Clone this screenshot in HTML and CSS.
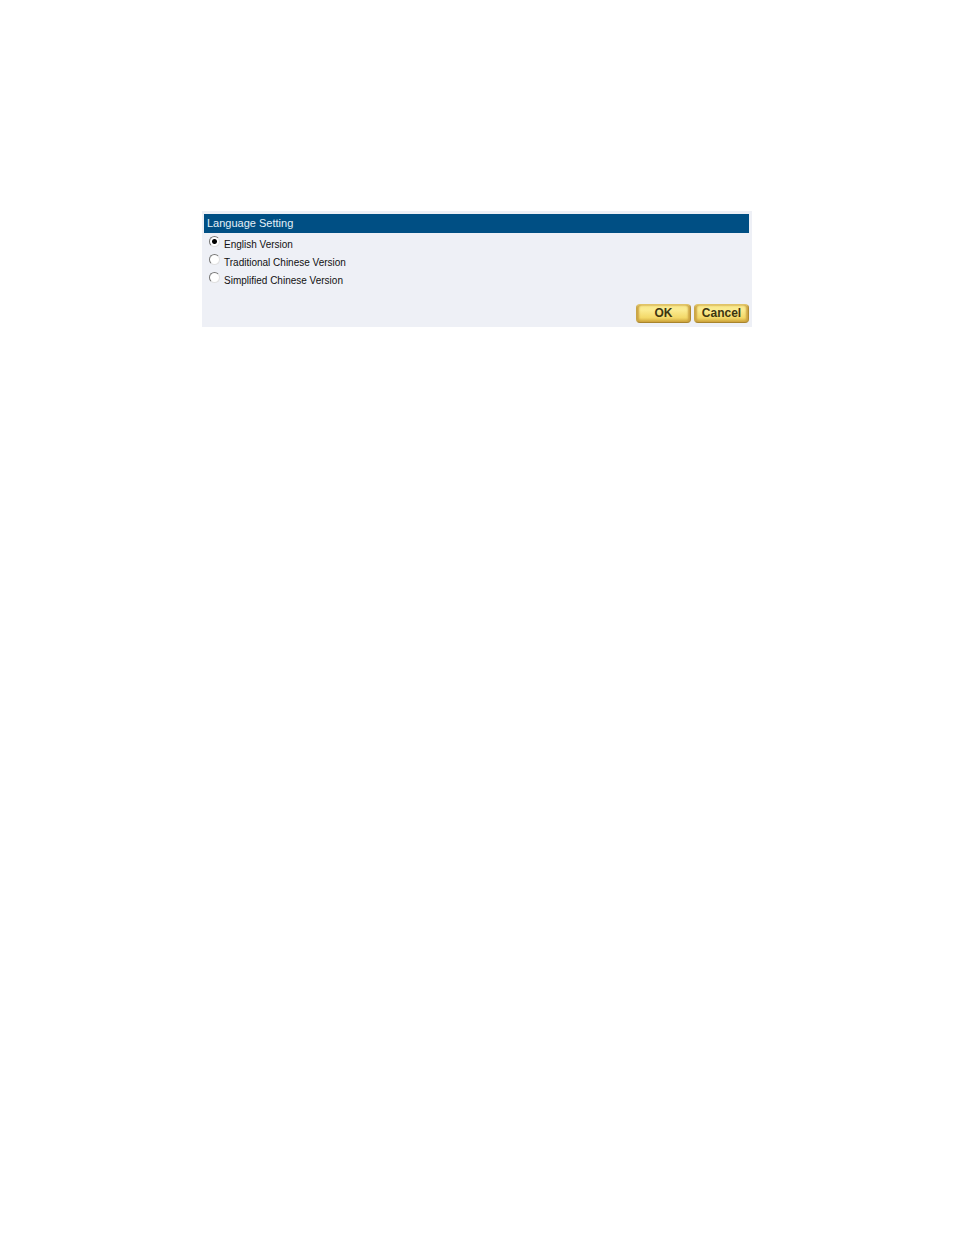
FILE: index.html
```html
<!DOCTYPE html>
<html lang="en">
<head>
    <meta charset="UTF-8">
    <meta name="viewport" content="width=device-width, initial-scale=1.0">
    <title>Language Setting</title>
    <link rel="stylesheet" href="styles.css">
</head>
<body>
    <form class="panel">
        <h1 class="panel-title" id="language-title">Language Setting</h1>
        <div class="options" role="radiogroup" aria-labelledby="language-title">
            <div class="option">
                <input type="radio" id="lang-en" name="language" value="en" checked>
                <label for="lang-en">English Version</label>
            </div>
            <div class="option">
                <input type="radio" id="lang-tc" name="language" value="tc">
                <label for="lang-tc">Traditional Chinese Version</label>
            </div>
            <div class="option">
                <input type="radio" id="lang-sc" name="language" value="sc">
                <label for="lang-sc">Simplified Chinese Version</label>
            </div>
        </div>
        <div class="actions">
            <button type="submit">OK</button>
            <button type="reset">Cancel</button>
        </div>
    </form>
</body>
</html>
```
FILE: styles.css
```css
body {
    font-family: Arial, "Liberation Sans", sans-serif;
    background-color: #fff;
    color: #111;
    margin: 0;
    padding: 211px 16px 16px;
}
.panel {
    box-sizing: border-box;
    max-width: 550px;
    margin: 0 auto;
    padding: 3px 3px 4px 2px;
    background-color: #eef0f6;
}
.panel-title {
    margin: 0;
    padding: 0 3px;
    background-color: #004f84;
    color: #e4f1f8;
    font-size: 11px;
    font-weight: normal;
    line-height: 19px;
}
.options {
    padding: 3px 5px 0;
}
.option {
    display: flex;
    align-items: flex-start;
    gap: 4px;
    height: 18px;
    font-size: 10px;
    line-height: 18px;
}
/* sunken round button with a light lower edge */
.option input {
    appearance: none;
    box-sizing: border-box;
    flex: none;
    width: 11px;
    height: 11px;
    margin: 0;
    border: 1px solid;
    border-color: #777 #e0e0e0 #e0e0e0 #777;
    border-radius: 50%;
    background-color: #fff;
}
.option input:checked {
    background-image: radial-gradient(circle, #000 2px, transparent 3px);
}
.actions {
    display: flex;
    justify-content: flex-end;
    gap: 3px;
    margin-top: 14px;
}
.actions button {
    width: 55px;
    height: 19px;
    padding: 0;
    border: 1px solid;
    border-color: #e0c468 #b08a30 #a8842c #c8a648;
    border-radius: 4px;
    background: linear-gradient(#f6e68c, #fbec92 30%, #f3d868 75%, #cfa63c);
    box-shadow: inset 2px 0 2px #cda544, inset -2px 0 2px #cda544;
    color: #3d3510;
    font-family: Impact, "Liberation Sans Narrow", "Liberation Sans", sans-serif;
    font-size: 12px;
    font-weight: bold;
    line-height: 17px;
    cursor: pointer;
}
```
